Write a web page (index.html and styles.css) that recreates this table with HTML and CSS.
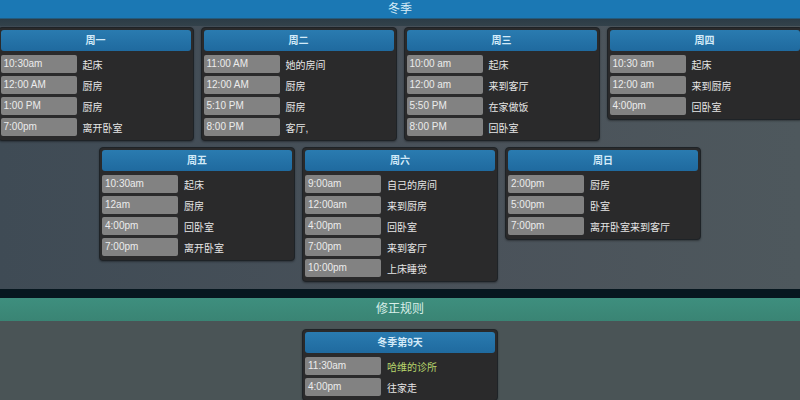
FILE: index.html
```html
<!DOCTYPE html>
<html lang="zh">
<head>
<meta charset="utf-8">
<link rel="stylesheet" href="styles.css">
</head>
<body>
<header class="topbar">冬季</header>
<main class="season">
  <div class="row">
    <section class="card">
      <h3 class="card-head">周一</h3>
      <div class="item"><span class="time">10:30am</span><span class="what">起床</span></div>
      <div class="item"><span class="time">12:00 AM</span><span class="what">厨房</span></div>
      <div class="item"><span class="time">1:00 PM</span><span class="what">厨房</span></div>
      <div class="item"><span class="time">7:00pm</span><span class="what">离开卧室</span></div>
    </section>
    <section class="card">
      <h3 class="card-head">周二</h3>
      <div class="item"><span class="time">11:00 AM</span><span class="what">她的房间</span></div>
      <div class="item"><span class="time">12:00 AM</span><span class="what">厨房</span></div>
      <div class="item"><span class="time">5:10 PM</span><span class="what">厨房</span></div>
      <div class="item"><span class="time">8:00 PM</span><span class="what">客厅,</span></div>
    </section>
    <section class="card">
      <h3 class="card-head">周三</h3>
      <div class="item"><span class="time">10:00 am</span><span class="what">起床</span></div>
      <div class="item"><span class="time">12:00 am</span><span class="what">来到客厅</span></div>
      <div class="item"><span class="time">5:50 PM</span><span class="what">在家做饭</span></div>
      <div class="item"><span class="time">8:00 PM</span><span class="what">回卧室</span></div>
    </section>
    <section class="card">
      <h3 class="card-head">周四</h3>
      <div class="item"><span class="time">10:30 am</span><span class="what">起床</span></div>
      <div class="item"><span class="time">12:00 am</span><span class="what">来到厨房</span></div>
      <div class="item"><span class="time">4:00pm</span><span class="what">回卧室</span></div>
    </section>
  </div>
  <div class="row row2">
    <section class="card">
      <h3 class="card-head">周五</h3>
      <div class="item"><span class="time">10:30am</span><span class="what">起床</span></div>
      <div class="item"><span class="time">12am</span><span class="what">厨房</span></div>
      <div class="item"><span class="time">4:00pm</span><span class="what">回卧室</span></div>
      <div class="item"><span class="time">7:00pm</span><span class="what">离开卧室</span></div>
    </section>
    <section class="card">
      <h3 class="card-head">周六</h3>
      <div class="item"><span class="time">9:00am</span><span class="what">自己的房间</span></div>
      <div class="item"><span class="time">12:00am</span><span class="what">来到厨房</span></div>
      <div class="item"><span class="time">4:00pm</span><span class="what">回卧室</span></div>
      <div class="item"><span class="time">7:00pm</span><span class="what">来到客厅</span></div>
      <div class="item"><span class="time">10:00pm</span><span class="what">上床睡觉</span></div>
    </section>
    <section class="card">
      <h3 class="card-head">周日</h3>
      <div class="item"><span class="time">2:00pm</span><span class="what">厨房</span></div>
      <div class="item"><span class="time">5:00pm</span><span class="what">卧室</span></div>
      <div class="item"><span class="time">7:00pm</span><span class="what">离开卧室来到客厅</span></div>
    </section>
  </div>
</main>
<div class="divider"></div>
<header class="rulebar">修正规则</header>
<main class="rules">
  <div class="row">
    <section class="card">
      <h3 class="card-head">冬季第9天</h3>
      <div class="item"><span class="time">11:30am</span><span class="what special">哈维的诊所</span></div>
      <div class="item"><span class="time">4:00pm</span><span class="what">往家走</span></div>
    </section>
  </div>
</main>
</body>
</html>
```

FILE: styles.css
```css
* { box-sizing: border-box; }
html, body { margin: 0; padding: 0; }
body {
  width: 800px;
  height: 400px;
  overflow: hidden;
  background: #4b5556;
  font-family: "Liberation Sans", "Noto Sans CJK SC", sans-serif;
  color: #e8e8e8;
}
.topbar {
  height: 26px;
  line-height: 19px;
  text-align: center;
  font-size: 12px;
  color: #d6ecf7;
  background: linear-gradient(to bottom, #1b78b4 0, #1b78b4 18px, #2c3c46 19px, #33424b 26px);
}
.season {
  background: linear-gradient(to right, #3f4b55, #4a525a 60%, #4e585d);
  padding: 1px 0 7px;
}
.row {
  display: flex;
  justify-content: center;
  align-items: flex-start;
  gap: 7px;
}
.row2 { margin-top: 6px; }
.card {
  flex: 0 0 196px;
  width: 196px;
  background: #2a2a2b;
  border: 1px solid #1e2327;
  border-radius: 4px;
  padding: 2px 2px 4px;
  box-shadow: 0 1px 2px rgba(0,0,0,0.35);
}
.card-head {
  margin: 0 0 4px;
  height: 21px;
  line-height: 21px;
  text-align: center;
  font-size: 10px;
  font-weight: bold;
  color: #d3eaf8;
  background: linear-gradient(to bottom, #2a7bb0, #1f6a9f);
  border-radius: 3px;
}
.item {
  display: flex;
  align-items: center;
  height: 18px;
  margin-bottom: 3px;
}
.item:last-child { margin-bottom: 0; }
.time {
  flex: 0 0 76px;
  height: 18px;
  line-height: 18px;
  padding-left: 3px;
  font-size: 10px;
  color: #ececec;
  background: #828282;
  border-radius: 2px;
}
.what {
  margin-left: 6px;
  font-size: 10px;
  color: #e6e6e6;
}
.what.special { color: #b7d66c; }
.divider {
  height: 9px;
  background: #07171f;
}
.rulebar {
  height: 23px;
  line-height: 23px;
  text-align: center;
  font-size: 12px;
  color: #d9efe9;
  background: linear-gradient(to bottom, #3e8f7e, #3a8474);
}
.rules {
  padding-top: 8px;
  background: #4a5456;
}
```
